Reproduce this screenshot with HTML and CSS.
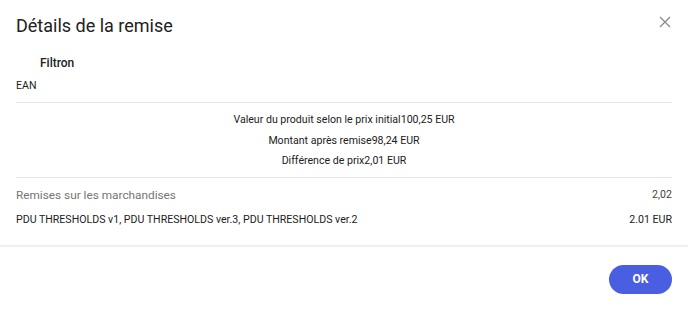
FILE: index.html
```html
<!DOCTYPE html>
<html lang="fr">
<head>
<meta charset="utf-8">
<link rel="stylesheet" href="styles.css">
</head>
<body>
<div class="dialog">
  <div class="header">
    <h1 class="title">Détails de la remise</h1>
    <button class="close" aria-label="Fermer">
      <svg width="12" height="12" viewBox="0 0 12 12"><path d="M1 1L11 11M11 1L1 11" stroke="#8a8a8a" stroke-width="1.3" fill="none"/></svg>
    </button>
  </div>
  <div class="content">
    <div class="product">Filtron</div>
    <div class="ean">EAN</div>
    <div class="summary">
      <div class="sline">Valeur du produit selon le prix initial100,25 EUR</div>
      <div class="sline">Montant après remise98,24 EUR</div>
      <div class="sline">Différence de prix2,01 EUR</div>
    </div>
    <div class="row head">
      <span>Remises sur les marchandises</span>
      <span>2,02</span>
    </div>
    <div class="row item">
      <span>PDU THRESHOLDS v1, PDU THRESHOLDS ver.3, PDU THRESHOLDS ver.2</span>
      <span>2.01 EUR</span>
    </div>
  </div>
  <div class="footer">
    <button class="ok">OK</button>
  </div>
</div>
</body>
</html>
```
FILE: styles.css
```css
* { box-sizing: border-box; }
body {
  margin: 0;
  background: #fff;
  font-family: Roboto, "Liberation Sans", sans-serif;
  color: #212121;
}
.dialog { width: 688px; }
.header {
  display: flex;
  justify-content: space-between;
  align-items: flex-start;
  padding: 14px 16px 0 16px;
  height: 53px;
}
.title {
  margin: 0;
  font-size: 18px;
  font-weight: 400;
  line-height: 24px;
  color: #212121;
}
.close {
  border: 0;
  background: none;
  padding: 0;
  margin: 2px 1px 0 0;
  width: 12px;
  height: 12px;
  display: flex;
}
.content { padding: 0 16px; }
.product {
  padding-left: 24px;
  font-size: 12px;
  font-weight: 500;
  line-height: 20px;
}
.ean {
  margin-top: 3px;
  font-size: 10.6px;
  line-height: 20px;
}
.summary {
  margin-top: 6px;
  border-top: 1px solid #e6e4f4;
  border-bottom: 1px solid #e6e4f4;
  padding: 7px 0 5px;
  text-align: center;
  font-size: 10.6px;
}
.sline { line-height: 20.5px; }
.row {
  display: flex;
  justify-content: space-between;
}
.head {
  margin-top: 7px;
  font-size: 11.8px;
  line-height: 20px;
  color: #757575;
}
.head span:last-child { color: #424242; font-size: 10.6px; }
.item {
  margin-top: 5px;
  font-size: 10.6px;
  line-height: 20px;
}
.footer {
  margin-top: 15px;
  border-top: 2px solid #f0f0f0;
  display: flex;
  justify-content: flex-end;
  padding: 18px 16px 0;
}
.ok {
  width: 63px;
  height: 29px;
  border: 0;
  border-radius: 15px;
  background: #4a5ee1;
  color: #fff;
  font-family: Roboto, "Liberation Sans", sans-serif;
  font-size: 12px;
  font-weight: 700;
}
```
